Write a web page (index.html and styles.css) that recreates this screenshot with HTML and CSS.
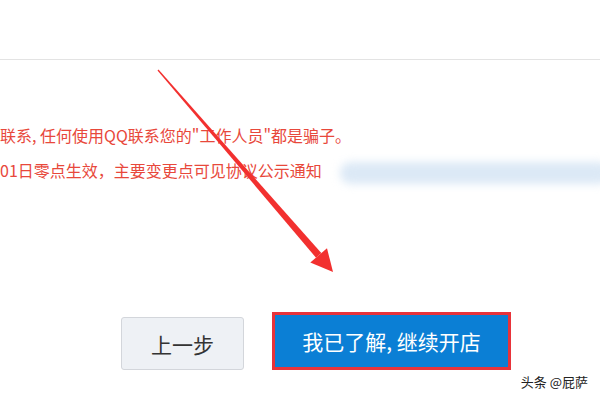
FILE: index.html
```html
<!DOCTYPE html>
<html lang="zh-CN">
<head>
    <meta charset="UTF-8">
    <title>开店协议</title>
    <link rel="stylesheet" href="styles.css">
</head>
<body>
    <div class="page">
        <div class="header"></div>

        <div class="notice">
            <p>联系, 任何使用QQ联系您的"工作人员"都是骗子。</p>
            <p>01日零点生效，主要变更点可见协议公示通知<span class="blur"></span></p>
        </div>

        <div class="actions">
            <button class="btn btn-prev">上一步</button>
            <button class="btn btn-next">我已了解, 继续开店</button>
        </div>

        <!-- red arrow drawn on top -->
        <svg class="arrow" width="600" height="400" viewBox="0 0 600 400">
            <polygon points="157.5,70.5 158.5,69.5 321.3,253.1 316,257.7" fill="#f2302f"/>
            <polygon points="310.3,262.6 327,248.2 333,272" fill="#f2302f"/>
        </svg>

        <div class="watermark">头条 @屁萨</div>
    </div>
</body>
</html>
```

FILE: styles.css
```css
body {
    margin: 0;
    background: #fff;
    font-family: "Noto Sans CJK SC", "Liberation Sans", sans-serif;
    overflow: hidden;
}

.page {
    position: relative;
    width: 600px;
    height: 400px;
    overflow: hidden;
}

.header {
    height: 59px;
    border-bottom: 1px solid #e3e3e3;
}

.notice {
    padding-top: 58px;
    color: #e8483b;
    font-size: 16px;
    line-height: 35px;
    white-space: nowrap;
}

.notice p {
    margin: 0;
}

.blur {
    display: inline-block;
    vertical-align: middle;
    width: 270px;
    height: 22px;
    margin-left: 18px;
    border-radius: 11px;
    background: #dce9f6;
    filter: blur(4px);
}

.actions {
    display: flex;
    align-items: flex-end;
    gap: 28px;
    margin-top: 124px;
    padding-left: 121px;
}

.btn {
    font-family: inherit;
    font-size: 21px;
    cursor: pointer;
}

.btn-prev {
    width: 123px;
    height: 53px;
    background: #eef1f5;
    border: 1px solid #d3d6db;
    border-radius: 3px;
    color: #333;
}

.btn-next {
    width: 239px;
    height: 58px;
    background: #0b7fd5;
    border: 3px solid #e8333a;
    color: #fff;
}

.arrow {
    position: absolute;
    top: 0;
    left: 0;
    pointer-events: none;
}

.watermark {
    position: absolute;
    right: 12px;
    bottom: 9px;
    font-size: 13px;
    color: #222;
}
```
